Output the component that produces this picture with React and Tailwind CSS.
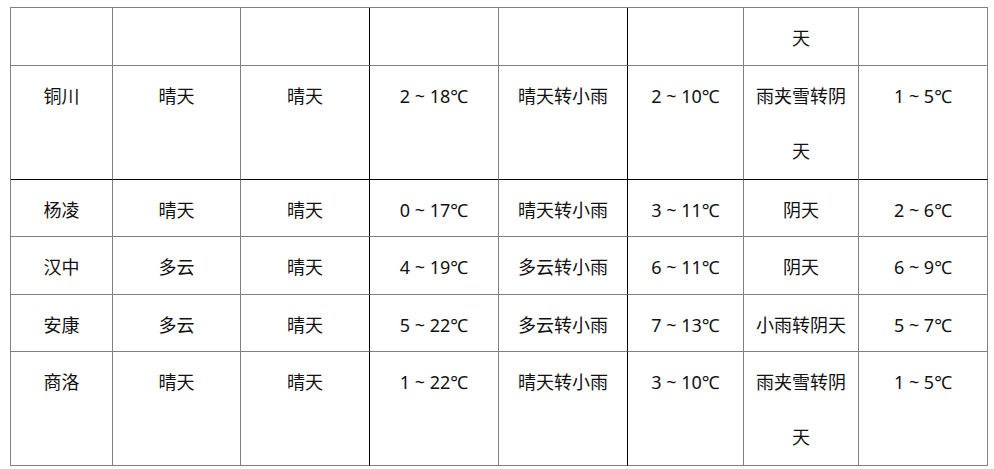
import React from 'react';

const cols = ['w-[102px]', 'w-[128px]', 'w-[129px]', 'w-[129px]', 'w-[129px]', 'w-[116px]', 'w-[115px]', 'w-[129px]'];

// the scan has a couple of dark lines among the grey ones
const darkCols = [2, 4];

const rows = [
    { h: 'h-[58px]', cells: ['', '', '', '', '', '', '天', ''] },
    { h: 'h-[114px]', cells: ['铜川', '晴天', '晴天', '2 ~ 18℃', '晴天转小雨', '2 ~ 10℃', '雨夹雪转阴天', '1 ~ 5℃'], dark: true },
    { h: 'h-[57px]', cells: ['杨凌', '晴天', '晴天', '0 ~ 17℃', '晴天转小雨', '3 ~ 11℃', '阴天', '2 ~ 6℃'] },
    { h: 'h-[58px]', cells: ['汉中', '多云', '晴天', '4 ~ 19℃', '多云转小雨', '6 ~ 11℃', '阴天', '6 ~ 9℃'] },
    { h: 'h-[57px]', cells: ['安康', '多云', '晴天', '5 ~ 22℃', '多云转小雨', '7 ~ 13℃', '小雨转阴天', '5 ~ 7℃'] },
    { h: 'h-[114px]', cells: ['商洛', '晴天', '晴天', '1 ~ 22℃', '晴天转小雨', '3 ~ 10℃', '雨夹雪转阴天', '1 ~ 5℃'] },
];

function App() {
    return (
        <div className="w-[994px] h-[469px] overflow-hidden bg-white pt-[7px] pl-[10px] text-[18px] text-[#111]" style={{ fontFamily: '"Noto Sans", "Noto Sans CJK SC", sans-serif' }}>
            <div className="inline-flex flex-col border-l border-t border-[#808080]">
                {rows.map((row, r) => (
                    <div key={r} className={`flex ${row.h}`}>
                        {row.cells.map((c, i) => (
                            <div
                                key={i}
                                className={`${cols[i]} shrink-0 border-r border-b px-[8px] pt-[3px] text-center leading-[55px] break-all ${darkCols.includes(i) ? 'border-r-black' : 'border-r-[#808080]'} ${row.dark ? 'border-b-black' : 'border-b-[#808080]'}`}
                            >
                                {c}
                            </div>
                        ))}
                    </div>
                ))}
            </div>
        </div>
    );
}

export default App;
